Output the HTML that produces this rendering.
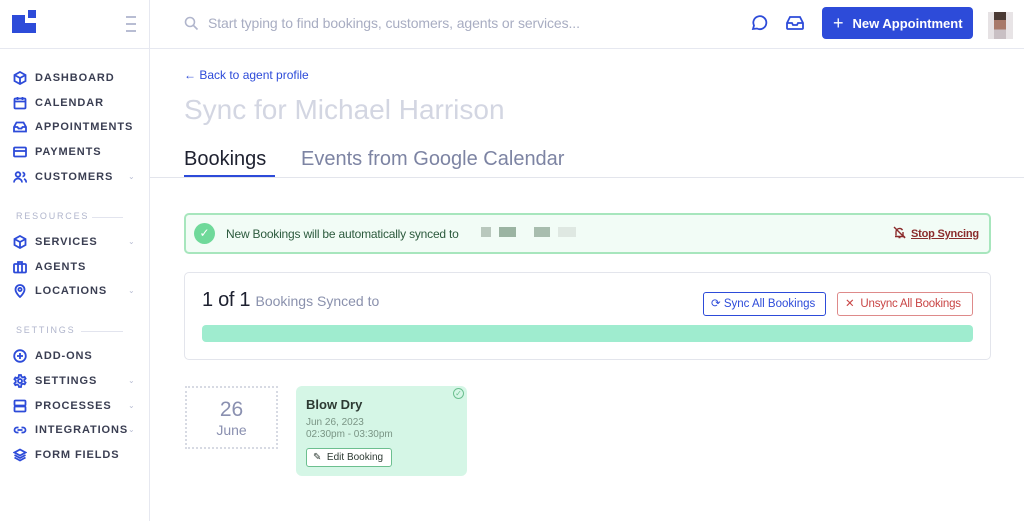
<!DOCTYPE html><html><head><style>
*{box-sizing:border-box;margin:0;padding:0}
body{width:1024px;height:521px;overflow:hidden;background:#fff;font-family:"Liberation Sans",sans-serif;position:relative;color:#333}
.abs{position:absolute}
.side{left:0;top:0;width:150px;height:521px;border-right:1px solid #e6e8f0}
.nav{position:absolute;left:13px;font-size:11px;font-weight:bold;letter-spacing:0.9px;color:#3a3e52;display:flex;align-items:center}
.nav svg{width:14px;height:14px;margin-right:8px;fill:none;stroke:#2d4bd9;stroke-width:1.8}
.chev{position:absolute;left:128px;font-size:8px;color:#b8bdd3}
.sec{position:absolute;left:16px;font-size:9px;letter-spacing:1.8px;color:#b0b5cc}
.sec i{position:absolute;top:6px;height:1px;background:#e2e4ee}
</style></head><body>
<div class="abs side"></div>
<div class="abs" style="left:12px;top:15px;width:13px;height:18px;background:#2d4bd9"></div>
<div class="abs" style="left:12px;top:23px;width:24px;height:10px;background:#2d4bd9"></div>
<div class="abs" style="left:28px;top:10px;width:8px;height:8px;background:#2d4bd9"></div>
<div class="abs" style="left:126px;top:16px;width:10px;height:1.5px;background:#b8bdd3;box-shadow:0 7px 0 #b8bdd3,0 14px 0 #b8bdd3"></div>
<div class="abs" style="left:0;top:48px;width:1024px;height:1px;background:#e6e8f0"></div>
<svg class="abs" style="left:184px;top:16px" width="15" height="15" fill="none" stroke="#b0b5cc" stroke-width="1.6"><circle cx="6" cy="6" r="4.5"/><path d="M9.5 9.5l4 4"/></svg>
<div class="abs" style="left:208px;top:15px;font-size:14px;color:#a8adc2;letter-spacing:-0.1px">Start typing to find bookings, customers, agents or services...</div>
<svg class="abs" style="left:750px;top:14px" width="18" height="18" fill="none" stroke="#2d4bd9" stroke-width="1.8"><path d="M3 15l1-3.5A6.5 6.5 0 1 1 7 14.5z"/></svg>
<svg class="abs" style="left:785px;top:14px" width="20" height="18" fill="none" stroke="#2d4bd9" stroke-width="1.8"><path d="M2 9l3-6h10l3 6v5a1 1 0 0 1-1 1H3a1 1 0 0 1-1-1zM2 9h5l1 2h4l1-2h5"/></svg>
<div class="abs" style="left:822px;top:7px;width:151px;height:32px;background:#2d4bd9;border-radius:4px;color:#fff;font-size:13px;font-weight:bold;display:flex;align-items:center;padding-left:11px;white-space:nowrap"><span style="font-size:18px;font-weight:normal;margin-right:9px">+</span>New Appointment</div>
<div class="abs" style="left:988px;top:12px;width:25px;height:27px;background:linear-gradient(#4a3a34 0 30%,#a87a6a 30% 65%,#c9c0c4 65%)"></div>
<div class="abs" style="left:988px;top:12px;width:6px;height:27px;background:#e6e2e4"></div><div class="abs" style="left:1006px;top:12px;width:7px;height:27px;background:#e8e4e6"></div>

<div class="nav" style="top:71px"><svg viewBox="0 0 14 14"><path d="M7 1l5.5 3v6L7 13 1.5 10V4zM1.5 4L7 7l5.5-3M7 7v6"/></svg>DASHBOARD</div>
<div class="nav" style="top:96px"><svg viewBox="0 0 14 14"><rect x="1.5" y="2.5" width="11" height="10" rx="1"/><path d="M1.5 5.5h11M4.5 1v3M9.5 1v3"/></svg>CALENDAR</div>
<div class="nav" style="top:120px"><svg viewBox="0 0 14 14"><path d="M1 7l2.5-4.5h7L13 7v4.5H1zM1 7h3.5l1 1.5h3l1-1.5H13"/></svg>APPOINTMENTS</div>
<div class="nav" style="top:145px"><svg viewBox="0 0 14 14"><rect x="1" y="2.5" width="12" height="9" rx="1"/><path d="M1 6h12"/></svg>PAYMENTS</div>
<div class="nav" style="top:170px"><svg viewBox="0 0 14 14"><circle cx="5" cy="4.5" r="2.3"/><path d="M1 12.5a4 4 0 0 1 8 0M9.5 2.5a2 2 0 0 1 0 4M11 9a3 3 0 0 1 2 3.5"/></svg>CUSTOMERS</div><div class="chev" style="top:172px">⌄</div>
<div class="sec" style="top:211px">RESOURCES<i style="left:76px;width:31px"></i></div>
<div class="nav" style="top:235px"><svg viewBox="0 0 14 14"><path d="M7 1l5.5 3v6L7 13 1.5 10V4zM1.5 4L7 7l5.5-3M7 7v6"/></svg>SERVICES</div><div class="chev" style="top:237px">⌄</div>
<div class="nav" style="top:260px"><svg viewBox="0 0 14 14"><rect x="1" y="4" width="12" height="8.5" rx="1"/><path d="M5 4V2h4v2M5 4v8.5M9 4v8.5"/></svg>AGENTS</div>
<div class="nav" style="top:284px"><svg viewBox="0 0 14 14"><path d="M7 13s4.5-4 4.5-7.5a4.5 4.5 0 0 0-9 0C2.5 9 7 13 7 13z"/><circle cx="7" cy="5.5" r="1.6"/></svg>LOCATIONS</div><div class="chev" style="top:286px">⌄</div>
<div class="sec" style="top:325px">SETTINGS<i style="left:65px;width:42px"></i></div>
<div class="nav" style="top:349px"><svg viewBox="0 0 14 14"><circle cx="7" cy="7" r="5.8"/><path d="M7 4v6M4 7h6"/></svg>ADD-ONS</div>
<div class="nav" style="top:374px"><svg viewBox="0 0 14 14"><circle cx="7" cy="7" r="2"/><path d="M6 1h2l.4 1.7 1.5.8 1.7-.6 1 1.7-1.3 1.2v1.6l1.3 1.2-1 1.7-1.7-.6-1.5.8L8 13H6l-.4-1.7-1.5-.8-1.7.6-1-1.7 1.3-1.2V6.4L1.4 5.2l1-1.7 1.7.6 1.5-.8z"/></svg>SETTINGS</div><div class="chev" style="top:376px">⌄</div>
<div class="nav" style="top:399px"><svg viewBox="0 0 14 14"><rect x="1.5" y="1.5" width="11" height="5" rx="1"/><rect x="1.5" y="7.5" width="11" height="5" rx="1"/></svg>PROCESSES</div><div class="chev" style="top:401px">⌄</div>
<div class="nav" style="top:423px"><svg viewBox="0 0 14 14"><path d="M5.5 4.5H4a2.5 2.5 0 0 0 0 5h1.5M8.5 4.5H10a2.5 2.5 0 0 1 0 5H8.5M4.5 7h5"/></svg>INTEGRATIONS</div><div class="chev" style="top:425px">⌄</div>
<div class="nav" style="top:448px"><svg viewBox="0 0 14 14"><path d="M7 1.5l5.5 3L7 7.5l-5.5-3zM1.5 7L7 10l5.5-3M1.5 9.5L7 12.5l5.5-3"/></svg>FORM FIELDS</div>

<div class="abs" style="left:184px;top:68px;font-size:12px;color:#2d4bd9">← Back to agent profile</div>
<div class="abs" style="left:184px;top:94px;font-size:28px;color:#d3d6e2">Sync for Michael Harrison</div>
<div class="abs" style="left:184px;top:148px;font-size:20px;color:#1e2130">Bookings</div>
<div class="abs" style="left:184px;top:175px;width:91px;height:3px;background:#2d4bd9"></div>
<div class="abs" style="left:301px;top:148px;font-size:20px;color:#7d84a3">Events from Google Calendar</div>
<div class="abs" style="left:150px;top:177px;width:874px;height:1px;background:#e3e5ec"></div>

<div class="abs" style="left:184px;top:213px;width:807px;height:41px;background:#f2fcf6;border:2px solid #a7e6bd;border-radius:5px"></div>
<div class="abs" style="left:194px;top:223px;width:21px;height:21px;border-radius:50%;background:#6fd99a;color:#fff;font-size:12px;text-align:center;line-height:21px">✓</div>
<div class="abs" style="left:226px;top:227px;font-size:12px;color:#2c5a3d;letter-spacing:-0.2px">New Bookings will be automatically synced to</div>
<div class="abs" style="left:481px;top:227px;width:10px;height:10px;background:#b9c8bd"></div><div class="abs" style="left:499px;top:227px;width:17px;height:10px;background:#9bb4a2"></div><div class="abs" style="left:534px;top:227px;width:16px;height:10px;background:#a8bdae"></div><div class="abs" style="left:558px;top:227px;width:18px;height:10px;background:#dfe8e2"></div>
<svg class="abs" style="left:893px;top:226px" width="13" height="13" fill="none" stroke="#8a2b2b" stroke-width="1.4"><path d="M3 9.5V6a3.5 3.5 0 0 1 6.5-1.8M10 6v3.5l1 1H2M5.5 11.5h2M1 1l11 11"/></svg>
<div class="abs" style="left:911px;top:228px;font-size:11px;font-weight:bold;color:#8a2b2b;text-decoration:underline;letter-spacing:-0.2px">Stop Syncing</div>

<div class="abs" style="left:184px;top:272px;width:807px;height:88px;border:1px solid #e3e5ec;border-radius:5px"></div>
<div class="abs" style="left:202px;top:289px;font-size:20px;color:#1e2130;letter-spacing:-0.3px">1 of 1 <span style="font-size:14px;color:#8a91ad;letter-spacing:0">Bookings Synced to</span></div>
<div class="abs" style="left:703px;top:292px;width:123px;height:24px;border:1px solid #2d4bd9;border-radius:3px;font-size:11.5px;color:#2d4bd9;line-height:22px;padding-left:7px;white-space:nowrap">⟳ Sync All Bookings</div>
<div class="abs" style="left:837px;top:292px;width:136px;height:24px;border:1px solid #de8a8a;border-radius:3px;font-size:11.5px;color:#c94545;line-height:22px;padding-left:7px;white-space:nowrap;letter-spacing:-0.2px">✕ &nbsp;Unsync All Bookings</div>
<div class="abs" style="left:202px;top:325px;width:771px;height:17px;background:#9feccf;border-radius:4px"></div>

<div class="abs" style="left:185px;top:386px;width:93px;height:63px;border:2px dotted #d7dae3;text-align:center;color:#8a90b0"><div style="font-size:21px;margin-top:10px">26</div><div style="font-size:14px">June</div></div>
<div class="abs" style="left:296px;top:386px;width:171px;height:90px;background:#d5f6e6;border-radius:6px"></div>
<div class="abs" style="left:453px;top:388px;width:11px;height:11px;border:1px solid #6cbf8f;border-radius:50%;font-size:8px;color:#6cbf8f;text-align:center;line-height:9px">✓</div>
<div class="abs" style="left:306px;top:397px;font-size:13px;font-weight:bold;color:#2d3a33">Blow Dry</div>
<div class="abs" style="left:306px;top:417px;font-size:10px;color:#7a9585;line-height:12px">Jun 26, 2023<br>02:30pm - 03:30pm</div>
<div class="abs" style="left:306px;top:448px;width:86px;height:19px;border:1px solid #6cbf8f;border-radius:3px;background:#fff;font-size:10px;color:#2d3a33;line-height:17px;padding-left:6px">✎ &nbsp;Edit Booking</div>
</body></html>
